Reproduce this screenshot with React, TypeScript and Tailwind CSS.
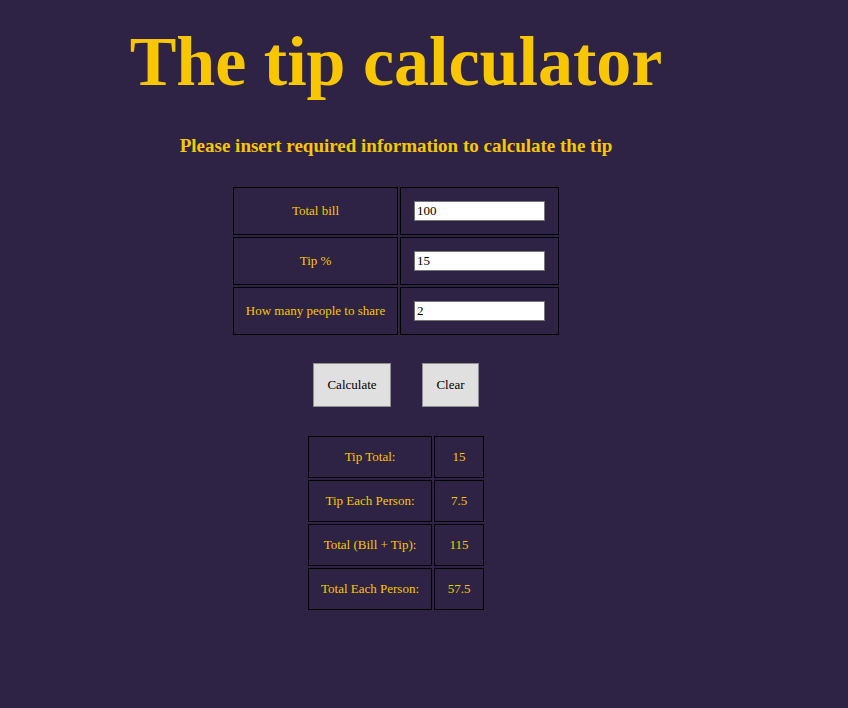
import React, { useState } from "react";

const serif = { fontFamily: '"Liberation Serif", "Times New Roman", serif' };

export default function App() {
  const [bill, setBill] = useState("100");
  const [tip, setTip] = useState("15");
  const [people, setPeople] = useState("2");
  const [result, setResult] = useState<string[]>(["15", "7.5", "115", "57.5"]);

  const calculate = () => {
    const b = parseFloat(bill) || 0;
    const t = parseFloat(tip) || 0;
    const p = parseFloat(people) || 1;
    const tipTotal = (b * t) / 100;
    setResult([
      String(tipTotal),
      String(tipTotal / p),
      String(b + tipTotal),
      String((b + tipTotal) / p),
    ]);
  };

  const clear = () => {
    setBill("");
    setTip("");
    setPeople("");
    setResult(["", "", "", ""]);
  };

  const inputs = [
    { label: "Total bill", value: bill, set: setBill },
    { label: "Tip %", value: tip, set: setTip },
    { label: "How many people to share", value: people, set: setPeople },
  ];

  const labels = ["Tip Total:", "Tip Each Person:", "Total (Bill + Tip):", "Total Each Person:"];

  return (
    <div className="min-h-[708px] w-full bg-[#2e2344] text-[#f8c700]" style={serif}>
      <div className="w-[792px] flex flex-col items-center pt-[22px]">
        <h1 className="text-[70px] leading-[80px] font-bold">The tip calculator</h1>
        <h3 className="mt-[33px] text-[19px] leading-[22px] font-bold">
          Please insert required information to calculate the tip
        </h3>

        <div className="mt-[30px] grid grid-cols-[165px_159px] gap-[2px] text-[13px]">
          {inputs.map((row) => (
            <React.Fragment key={row.label}>
              <div className="h-[48px] border border-black flex items-center justify-center">
                {row.label}
              </div>
              <div className="h-[48px] border border-black flex items-center justify-center">
                <input
                  type="text"
                  value={row.value}
                  onChange={(e) => row.set(e.target.value)}
                  className="w-[131px] h-[20px] bg-white border border-[#767676] px-[2px] text-black text-[13px] outline-none"
                  style={serif}
                />
              </div>
            </React.Fragment>
          ))}
        </div>

        <div className="mt-[28px] flex gap-[31px] text-[13px] text-black">
          <button
            onClick={calculate}
            className="w-[78px] h-[44px] bg-[#e0e0e0] border border-[#8f8f8f]"
            style={serif}
          >
            Calculate
          </button>
          <button
            onClick={clear}
            className="w-[57px] h-[44px] bg-[#e0e0e0] border border-[#8f8f8f]"
            style={serif}
          >
            Clear
          </button>
        </div>

        <div className="mt-[29px] grid grid-cols-[124px_50px] gap-[2px] text-[13px]">
          {labels.map((l, i) => (
            <React.Fragment key={l}>
              <div className="h-[42px] border border-black flex items-center justify-center">{l}</div>
              <div className="h-[42px] border border-black flex items-center justify-center">{result[i]}</div>
            </React.Fragment>
          ))}
        </div>
      </div>
    </div>
  );
}
